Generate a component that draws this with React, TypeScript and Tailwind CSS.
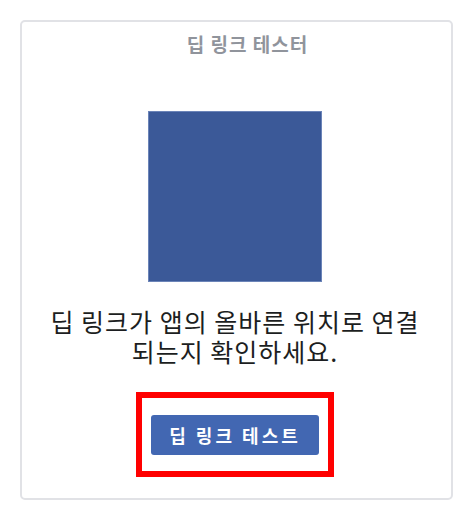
export default function App() {
  return (
    <div className="w-[471px] h-[525px] bg-white pt-[20px] pl-[20px]" style={{ fontFamily: '"Noto Sans CJK KR", "Noto Sans", sans-serif' }}>
      <div className="w-[433px] h-[480px] border-2 border-[#e1e2e6] rounded-[5px] flex flex-col items-center">
        <h1 className="mt-[10px] pl-[22px] text-[19px] leading-[24px] tracking-[1px] font-bold text-[#90949c]">딥 링크 테스터</h1>
        <div className="mt-[55px] mr-[3px] w-[174px] h-[171px] bg-[#3b5998] border border-[#6b84b8]" />
        <div className="mt-[24px] mr-[3px] flex flex-col items-center text-[25px] leading-[30px] tracking-[1px] text-[#1c1e21]">
          <span className="block h-[30px]">딥 링크가 앱의 올바른 위치로 연결</span>
          <span className="block h-[30px]">되는지 확인하세요.</span>
        </div>
        <div className="mt-[26px] mr-[3px] border-[6px] border-[#ff0000] pt-[17px] pb-[16px] px-[9px]">
          <button className="w-[168px] h-[40px] bg-[#4267b2] rounded-[3px] text-white text-[18px] tracking-[3px] font-bold">
            딥 링크 테스트
          </button>
        </div>
      </div>
    </div>
  )
}
